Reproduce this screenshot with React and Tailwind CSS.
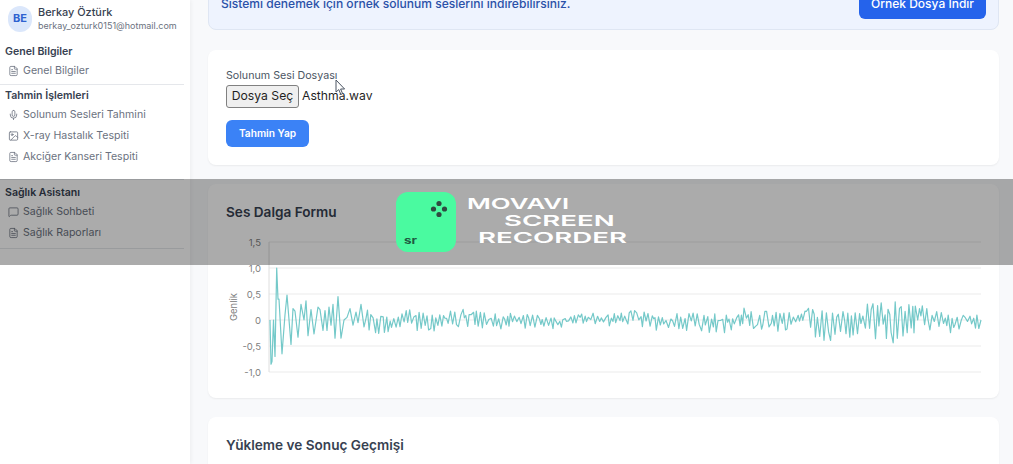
import React from "react";
import { FileText, Mic, Image, MessageSquare } from "lucide-react";

// first part of the wave, read off the picture: [x, amplitude]
const HEAD = [
  [270, 0], [271, -0.85], [272, -0.8], [273.5, 0], [275, -0.7], [276.7, 1], [278, 0.4], [279, 0.4], [282, -0.65],
  [285, 0.1], [287, 0.48], [291, -0.47], [293, 0.22], [295, 0.17], [298, -0.33], [301, 0.3], [304, 0], [306, 0.37],
  [308, -0.3], [311, 0.2], [314, -0.27], [318, 0.25], [320, 0.2], [323, -0.2], [325, 0.18], [327, -0.2], [329, 0.25],
  [331, -0.1], [333, 0.3], [335, -0.35], [338, 0.45], [341, -0.35], [344, 0], [347, 0.05], [350, 0.22], [353, -0.1],
  [356, 0.15], [358, -0.05], [361, 0.3], [364, -0.13],
];

// amplitude of the rest of the wave, by x
const ENVELOPE = [
  [364, 0.24], [420, 0.2], [480, 0.17], [520, 0.16], [560, 0.11], [620, 0.14], [680, 0.18], [720, 0.22], [790, 0.2],
  [820, 0.32], [860, 0.3], [895, 0.42], [930, 0.22], [980, 0.15],
];

function envelopeAt(x) {
  for (let i = 1; i < ENVELOPE.length; i++) {
    const [x0, a0] = ENVELOPE[i - 1];
    const [x1, a1] = ENVELOPE[i];
    if (x <= x1) return a0 + ((a1 - a0) * (x - x0)) / (x1 - x0);
  }
  return 0.15;
}

function wavePoints() {
  const points = [...HEAD];
  let seed = 41;
  const next = () => {
    seed = (seed * 1103515245 + 12345) % 2147483648;
    return seed / 2147483648;
  };
  let sign = 1;
  let x = 366;
  while (x < 981) {
    const amp = envelopeAt(x) * (0.1 + 0.95 * next());
    // slow drift plus spikes, so that it does not read as a plain zigzag
    const drift = 0.035 * Math.sin(x / 9) + 0.03 * Math.sin(x / 23);
    points.push([x, sign * amp * (sign < 0 ? 1.05 : 0.85) + drift]);
    if (next() < 0.8) sign = -sign;
    x += 1.2 + next() * 1.3;
  }
  points.push([981, 0]);
  return points.map(([px, a]) => `${px.toFixed(1)},${(320 - a * 52).toFixed(1)}`).join(" ");
}

const TICKS = [["1,5", 242], ["1,0", 268], ["0,5", 294], ["0", 320], ["-0,5", 346], ["-1,0", 372]];

function WaveChart() {
  // viewBox uses page coordinates, so the numbers above can be read straight off the picture
  return (
    <svg className="block w-[791px] h-[160px] mt-[11px]" viewBox="208 232 791 160">
      {TICKS.map(([label, y]) => (
        <g key={label}>
          <line x1="269" x2="981" y1={y} y2={y} stroke="#ebebeb" />
          <text x="261" y={y + 3.5} textAnchor="end" fontSize="9.5" fill="#808080">{label}</text>
        </g>
      ))}
      <line x1="269" x2="269" y1="242" y2="372" stroke="#dedede" />
      <text x="237" y="307" textAnchor="middle" fontSize="9.5" fill="#808080" transform="rotate(-90 237 307)">Genlik</text>
      <polyline points={wavePoints()} fill="none" stroke="#74c9c9" strokeWidth="1.2" strokeLinejoin="round" />
    </svg>
  );
}

function NavItem({ icon: Icon, children }) {
  return (
    <div className="flex items-center h-[21px] pl-2 gap-[4px] text-[10.6px] text-[#6b7280]">
      <Icon className="w-[11px] h-[12px] shrink-0" strokeWidth={1.75} />
      <span>{children}</span>
    </div>
  );
}

function Sidebar() {
  return (
    <aside className="w-[190px] shrink-0 bg-white shadow-[1px_0_4px_rgba(0,0,0,0.05)] z-10 pr-[6px]">
      <div className="flex items-center gap-[6px] pl-2 pt-1 h-[33px]">
        <div className="w-6 h-[26px] rounded-full bg-[#dbe7fb] text-[#2f62d0] flex items-center justify-center text-[11px] font-bold">BE</div>
        <div>
          <div className="text-[10.9px] leading-[14px] font-medium text-[#374151]">Berkay Öztürk</div>
          <div className="text-[9px] leading-[14px] text-[#6b7280]">berkay_ozturk0151@hotmail.com</div>
        </div>
      </div>

      <div className="pt-[10px]">
        <div className="pl-[5px] h-[17px] flex items-center text-[10.6px] font-semibold text-[#374151]">Genel Bilgiler</div>
        <NavItem icon={FileText}>Genel Bilgiler</NavItem>
      </div>
      <div className="mt-[3px] border-t border-[#e5e7eb] pt-[2px]">
        <div className="pl-[5px] h-[17px] flex items-center text-[10.6px] font-semibold text-[#374151]">Tahmin İşlemleri</div>
        <NavItem icon={Mic}>Solunum Sesleri Tahmini</NavItem>
        <NavItem icon={Image}>X-ray Hastalık Tespiti</NavItem>
        <NavItem icon={FileText}>Akciğer Kanseri Tespiti</NavItem>
      </div>
      <div className="mt-[12px] border-t border-[#e5e7eb] pt-[4px]">
        <div className="pl-[5px] h-[17px] flex items-center text-[10.6px] font-semibold text-[#374151]">Sağlık Asistanı</div>
        <div className="-mt-px pt-px">
          <NavItem icon={MessageSquare}>Sağlık Sohbeti</NavItem>
          <NavItem icon={FileText}>Sağlık Raporları</NavItem>
        </div>
      </div>
      <div className="mt-[5px] border-t border-[#e5e7eb]" />
    </aside>
  );
}

function Recorder() {
  return (
    <div className="absolute left-0 right-0 top-[179px] h-[86px] bg-black/[0.33] z-20 pl-[396px] pt-[13px] flex gap-3">
      <div className="relative w-[60px] h-[60px] rounded-[12px] bg-[#4afaa0] shrink-0">
        <svg className="absolute left-[34px] top-[8px]" width="18" height="18" viewBox="0 0 18 18" fill="#2f4a40">
          <circle cx="9" cy="3.5" r="2.6" />
          <circle cx="3.5" cy="9" r="2.6" />
          <circle cx="14.5" cy="9" r="2.6" />
          <circle cx="9" cy="14.5" r="2.6" />
        </svg>
        <span className="absolute left-[8px] bottom-[6px] text-[10px] leading-[12px] font-bold text-[#1f5a42] scale-x-[1.35] origin-left">sr</span>
      </div>
      <div className="text-white text-[15px] leading-[17px] font-semibold pt-[3px]">
        <div className="origin-left scale-x-[1.72] whitespace-nowrap -ml-[1px]">MOVAVI</div>
        <div className="origin-left scale-x-[1.84] whitespace-nowrap ml-[36px]">SCREEN</div>
        <div className="origin-left scale-x-[1.84] whitespace-nowrap ml-[10px]">RECORDER</div>
      </div>
    </div>
  );
}

function Cursor() {
  return (
    <svg className="absolute left-[335px] top-[79px] z-10" width="11" height="17" viewBox="0 0 11 17">
      <path d="M1 1 L1 13 L3.8 10.6 L5.8 15.4 L7.6 14.6 L5.6 10 L9.6 10 Z" fill="#fff" stroke="#4b5563" strokeWidth="1" />
    </svg>
  );
}

export default function App() {
  return (
    <div className="relative w-[1013px] h-[464px] overflow-hidden flex bg-[#f8f9fb] font-['Inter',sans-serif]">
      <Sidebar />
      <main className="flex-1 pl-[18px] pr-[14px] -mt-[42px]">
        <div className="h-[72px] rounded-lg bg-[#eef3fe] border border-[#dfe6f3] flex items-center justify-between pl-3 pr-3 pt-[19px]">
          <span className="text-[12.05px] leading-[22px] font-medium text-[#2a51a8]">Sistemi denemek için örnek solunum seslerini indirebilirsiniz.</span>
          <button className="w-[127px] h-[30px] rounded-md bg-[#2563eb] text-white text-[12px] font-medium">Örnek Dosya İndir</button>
        </div>

        <section className="mt-5 h-[115px] rounded-lg bg-white shadow-[0_1px_2px_rgba(0,0,0,0.06)] pl-[18px] pt-[18px]">
          <div className="text-[10.7px] leading-[16px] text-[#4b5563]">Solunum Sesi Dosyası</div>
          <div className="flex items-center gap-[3px] mt-[1px]">
            <button className="w-[73px] h-[23px] rounded-[3px] border border-[#808080] bg-[#efefef] text-[12.2px] text-[#1f1f1f]">Dosya Seç</button>
            <span className="text-[12.2px] text-[#1f1f1f]">Asthma.wav</span>
          </div>
          <button className="mt-3 w-[83px] h-[27px] rounded-md bg-[#3b82f6] text-white text-[10.2px] font-semibold">Tahmin Yap</button>
        </section>

        <section className="mt-[19px] h-[214px] rounded-lg bg-white shadow-[0_1px_2px_rgba(0,0,0,0.06)] pt-[19px]">
          <h2 className="pl-[18px] text-[13.6px] leading-[18px] font-semibold text-[#374151]">Ses Dalga Formu</h2>
          <WaveChart />
        </section>

        <section className="mt-[19px] h-[80px] rounded-lg bg-white shadow-[0_1px_2px_rgba(0,0,0,0.06)] pt-[19px]">
          <h2 className="pl-[18px] text-[13.6px] leading-[18px] font-semibold text-[#374151]">Yükleme ve Sonuç Geçmişi</h2>
        </section>
      </main>
      <Cursor />
      <Recorder />
    </div>
  );
}
